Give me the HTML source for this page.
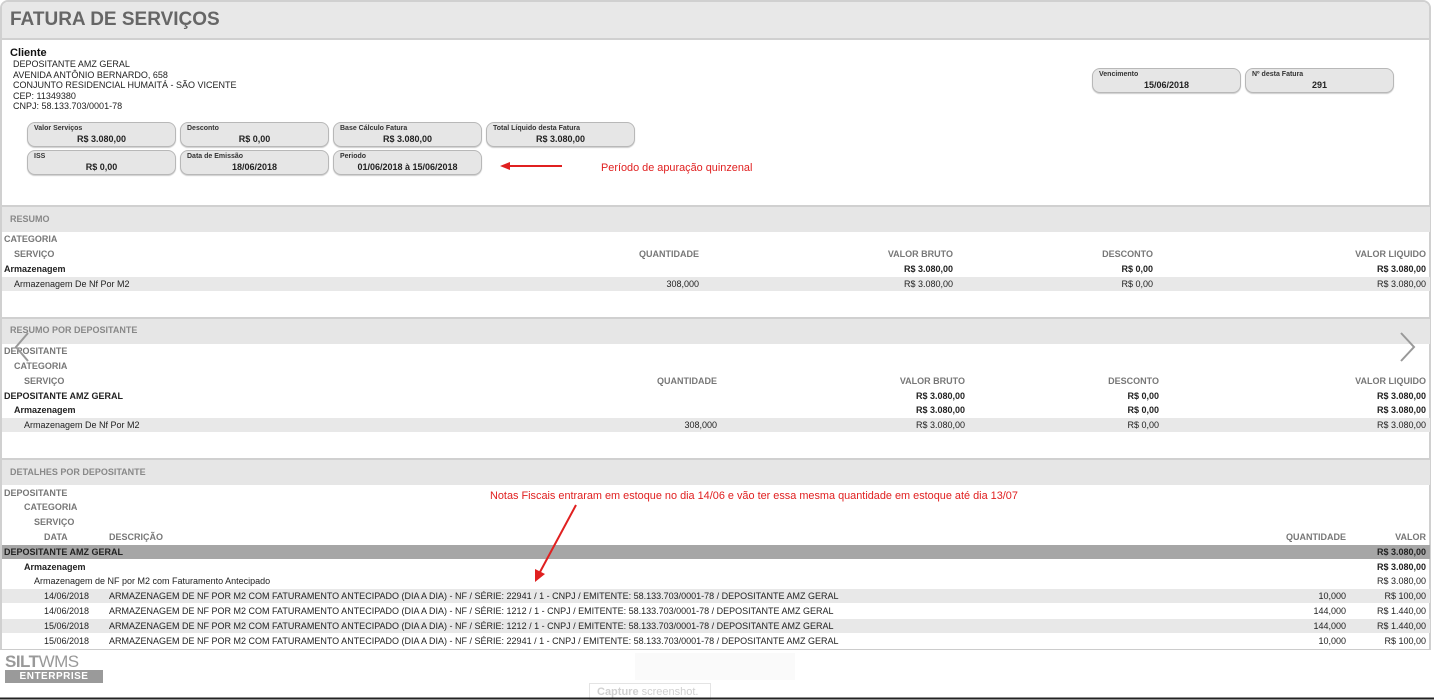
<!DOCTYPE html>
<html><head><meta charset="utf-8">
<style>
*{margin:0;padding:0;box-sizing:border-box}
body{width:1434px;height:700px;overflow:hidden;background:#fff;font-family:"Liberation Sans",Arial,sans-serif;font-size:9px;color:#222;position:relative}
.a{position:absolute;white-space:nowrap;line-height:12px}
.r{text-align:right}
.b{font-weight:bold}
.h{color:#777;font-weight:bold}
.bar{position:absolute;left:2px;width:1428px;height:27px;background:#e6e6e6;border-top:2px solid #d0d0d0}
.bg{position:absolute;left:2px;width:1428px;height:14px;background:#e8e8e8}
.box{position:absolute;height:25px;width:149px;background:#e6e6e6;border:1px solid #b8b8b8;border-radius:8px;box-shadow:0 1px 1px #ccc}
.box .l{position:absolute;left:6px;top:2px;font-size:7px;line-height:8px;font-weight:bold;color:#333}
.box .v{position:absolute;left:0;right:0;top:10px;text-align:center;font-size:9px;font-weight:bold;color:#222;line-height:12px}
.red{color:#e02020;font-size:10.9px}
</style></head><body>
<div style="position:absolute;left:0;top:0;width:1431px;height:650px;border:2px solid #d0d0d0;border-bottom:1px solid #ccc;border-radius:8px 8px 0 0"></div>
<div style="position:absolute;left:2px;top:2px;width:1427px;height:38px;background:#e8e8e8;border-bottom:2px solid #d0d0d0;border-radius:6px 6px 0 0"></div>
<div class="a b" style="left:10px;top:8px;font-size:19px;line-height:24px;color:#666">FATURA DE SERVIÇOS</div>

<div class="a b" style="left:10px;top:47px;font-size:11px;color:#111">Cliente</div>
<div class="a" style="left:13px;top:59px;line-height:10.5px;color:#222">DEPOSITANTE AMZ GERAL<br>AVENIDA ANTÔNIO BERNARDO, 658<br>CONJUNTO RESIDENCIAL HUMAITÁ - SÃO VICENTE<br>CEP: 11349380<br>CNPJ: 58.133.703/0001-78</div>

<div class="box" style="left:27px;top:122px"><div class="l">Valor Serviços</div><div class="v">R$ 3.080,00</div></div>
<div class="box" style="left:180px;top:122px"><div class="l">Desconto</div><div class="v">R$ 0,00</div></div>
<div class="box" style="left:333px;top:122px"><div class="l">Base Cálculo Fatura</div><div class="v">R$ 3.080,00</div></div>
<div class="box" style="left:486px;top:122px"><div class="l">Total Líquido desta Fatura</div><div class="v">R$ 3.080,00</div></div>
<div class="box" style="left:27px;top:150px"><div class="l">ISS</div><div class="v">R$ 0,00</div></div>
<div class="box" style="left:180px;top:150px"><div class="l">Data de Emissão</div><div class="v">18/06/2018</div></div>
<div class="box" style="left:333px;top:150px"><div class="l">Periodo</div><div class="v">01/06/2018 à 15/06/2018</div></div>
<div class="box" style="left:1092px;top:68px"><div class="l">Vencimento</div><div class="v">15/06/2018</div></div>
<div class="box" style="left:1245px;top:68px"><div class="l">Nº desta Fatura</div><div class="v">291</div></div>

<div class="a red" style="left:601px;top:162px">Período de apuração quinzenal</div>

<!-- RESUMO -->
<div class="bar" style="top:205px"></div>
<div class="a h" style="left:10px;top:213px;color:#888">RESUMO</div>
<div class="a h" style="left:4px;top:233px">CATEGORIA</div>
<div class="a h" style="left:14px;top:248px">SERVIÇO</div>
<div class="a h r" style="right:735px;top:248px">QUANTIDADE</div>
<div class="a h r" style="right:481px;top:248px">VALOR BRUTO</div>
<div class="a h r" style="right:281px;top:248px">DESCONTO</div>
<div class="a h r" style="right:8px;top:248px">VALOR LIQUIDO</div>
<div class="a b" style="left:4px;top:263px">Armazenagem</div>
<div class="a b r" style="right:481px;top:263px">R$ 3.080,00</div>
<div class="a b r" style="right:281px;top:263px">R$ 0,00</div>
<div class="a b r" style="right:8px;top:263px">R$ 3.080,00</div>
<div class="bg" style="top:277px"></div>
<div class="a" style="left:14px;top:278px">Armazenagem De Nf Por M2</div>
<div class="a r" style="right:735px;top:278px">308,000</div>
<div class="a r" style="right:481px;top:278px">R$ 3.080,00</div>
<div class="a r" style="right:281px;top:278px">R$ 0,00</div>
<div class="a r" style="right:8px;top:278px">R$ 3.080,00</div>

<!-- RESUMO POR DEPOSITANTE -->
<div class="bar" style="top:317px"></div>
<div class="a h" style="left:10px;top:324px;color:#888">RESUMO POR DEPOSITANTE</div>
<div class="a h" style="left:4px;top:345px">DEPOSITANTE</div>
<div class="a h" style="left:14px;top:360px">CATEGORIA</div>
<div class="a h" style="left:24px;top:375px">SERVIÇO</div>
<div class="a h r" style="right:717px;top:375px">QUANTIDADE</div>
<div class="a h r" style="right:469px;top:375px">VALOR BRUTO</div>
<div class="a h r" style="right:275px;top:375px">DESCONTO</div>
<div class="a h r" style="right:8px;top:375px">VALOR LIQUIDO</div>
<div class="a b" style="left:4px;top:390px">DEPOSITANTE AMZ GERAL</div>
<div class="a b r" style="right:469px;top:390px">R$ 3.080,00</div>
<div class="a b r" style="right:275px;top:390px">R$ 0,00</div>
<div class="a b r" style="right:8px;top:390px">R$ 3.080,00</div>
<div class="a b" style="left:14px;top:404px">Armazenagem</div>
<div class="a b r" style="right:469px;top:404px">R$ 3.080,00</div>
<div class="a b r" style="right:275px;top:404px">R$ 0,00</div>
<div class="a b r" style="right:8px;top:404px">R$ 3.080,00</div>
<div class="bg" style="top:418px"></div>
<div class="a" style="left:24px;top:419px">Armazenagem De Nf Por M2</div>
<div class="a r" style="right:717px;top:419px">308,000</div>
<div class="a r" style="right:469px;top:419px">R$ 3.080,00</div>
<div class="a r" style="right:275px;top:419px">R$ 0,00</div>
<div class="a r" style="right:8px;top:419px">R$ 3.080,00</div>

<!-- DETALHES -->
<div class="bar" style="top:458px"></div>
<div class="a h" style="left:10px;top:466px;color:#888">DETALHES POR DEPOSITANTE</div>
<div class="a red" style="left:490px;top:490px">Notas Fiscais entraram em estoque no dia 14/06 e vão ter essa mesma quantidade em estoque até dia 13/07</div>
<div class="a h" style="left:4px;top:487px">DEPOSITANTE</div>
<div class="a h" style="left:24px;top:501px">CATEGORIA</div>
<div class="a h" style="left:34px;top:516px">SERVIÇO</div>
<div class="a h" style="left:44px;top:531px">DATA</div>
<div class="a h" style="left:109px;top:531px">DESCRIÇÃO</div>
<div class="a h r" style="right:88px;top:531px">QUANTIDADE</div>
<div class="a h r" style="right:8px;top:531px">VALOR</div>
<div class="bg" style="top:545px;background:#a6a6a6"></div>
<div class="a b" style="left:4px;top:546px">DEPOSITANTE AMZ GERAL</div>
<div class="a b r" style="right:8px;top:546px">R$ 3.080,00</div>
<div class="a b" style="left:24px;top:561px">Armazenagem</div>
<div class="a b r" style="right:8px;top:561px">R$ 3.080,00</div>
<div class="a" style="left:34px;top:575px">Armazenagem de NF por M2 com Faturamento Antecipado</div>
<div class="a r" style="right:8px;top:575px">R$ 3.080,00</div>

<div class="bg" style="top:589px"></div>
<div class="a" style="left:44px;top:590px">14/06/2018</div>
<div class="a" style="left:109px;top:590px">ARMAZENAGEM DE NF POR M2 COM FATURAMENTO ANTECIPADO (DIA A DIA) - NF / SÉRIE: 22941 / 1 - CNPJ / EMITENTE: 58.133.703/0001-78 / DEPOSITANTE AMZ GERAL</div>
<div class="a r" style="right:88px;top:590px">10,000</div>
<div class="a r" style="right:8px;top:590px">R$ 100,00</div>

<div class="a" style="left:44px;top:605px">14/06/2018</div>
<div class="a" style="left:109px;top:605px">ARMAZENAGEM DE NF POR M2 COM FATURAMENTO ANTECIPADO (DIA A DIA) - NF / SÉRIE: 1212 / 1 - CNPJ / EMITENTE: 58.133.703/0001-78 / DEPOSITANTE AMZ GERAL</div>
<div class="a r" style="right:88px;top:605px">144,000</div>
<div class="a r" style="right:8px;top:605px">R$ 1.440,00</div>

<div class="bg" style="top:619px"></div>
<div class="a" style="left:44px;top:620px">15/06/2018</div>
<div class="a" style="left:109px;top:620px">ARMAZENAGEM DE NF POR M2 COM FATURAMENTO ANTECIPADO (DIA A DIA) - NF / SÉRIE: 1212 / 1 - CNPJ / EMITENTE: 58.133.703/0001-78 / DEPOSITANTE AMZ GERAL</div>
<div class="a r" style="right:88px;top:620px">144,000</div>
<div class="a r" style="right:8px;top:620px">R$ 1.440,00</div>

<div class="a" style="left:44px;top:635px">15/06/2018</div>
<div class="a" style="left:109px;top:635px">ARMAZENAGEM DE NF POR M2 COM FATURAMENTO ANTECIPADO (DIA A DIA) - NF / SÉRIE: 22941 / 1 - CNPJ / EMITENTE: 58.133.703/0001-78 / DEPOSITANTE AMZ GERAL</div>
<div class="a r" style="right:88px;top:635px">10,000</div>
<div class="a r" style="right:8px;top:635px">R$ 100,00</div>

<!-- logo -->
<div class="a b" style="left:5px;top:653px;font-size:17px;line-height:17px;color:#999;letter-spacing:-0.5px">SILT<span style="font-weight:normal">WMS</span></div>
<div class="a b" style="left:5px;top:670px;width:98px;height:13px;background:#9a9a9a;color:#fff;font-size:10px;line-height:13px;text-align:center;letter-spacing:0.5px">ENTERPRISE</div>
<div style="position:absolute;left:635px;top:653px;width:160px;height:27px;background:#fafafa"></div>
<div class="a" style="left:589px;top:683px;width:122px;height:17px;border:1px solid #e4e4e4;color:#d0d0d0;font-size:11px;line-height:16px;padding-left:7px"><b>Capture</b> screenshot.</div>

<svg style="position:absolute;left:0;top:0" width="1434" height="700">
<line x1="508" y1="166" x2="562" y2="166" stroke="#e02020" stroke-width="2"/>
<polygon points="500,166 510,162 510,170" fill="#e02020"/>
<line x1="576" y1="505" x2="540" y2="572" stroke="#e02020" stroke-width="2"/>
<polygon points="535,582 535,569 545,574" fill="#e02020"/>
<polyline points="28,333 16,347 28,361" fill="none" stroke="#999" stroke-width="2"/>
<polyline points="1401,333 1414,347 1401,361" fill="none" stroke="#999" stroke-width="2"/>
<line x1="0" y1="698.5" x2="1434" y2="698.5" stroke="#222" stroke-width="2"/>
</svg>
</body></html>
